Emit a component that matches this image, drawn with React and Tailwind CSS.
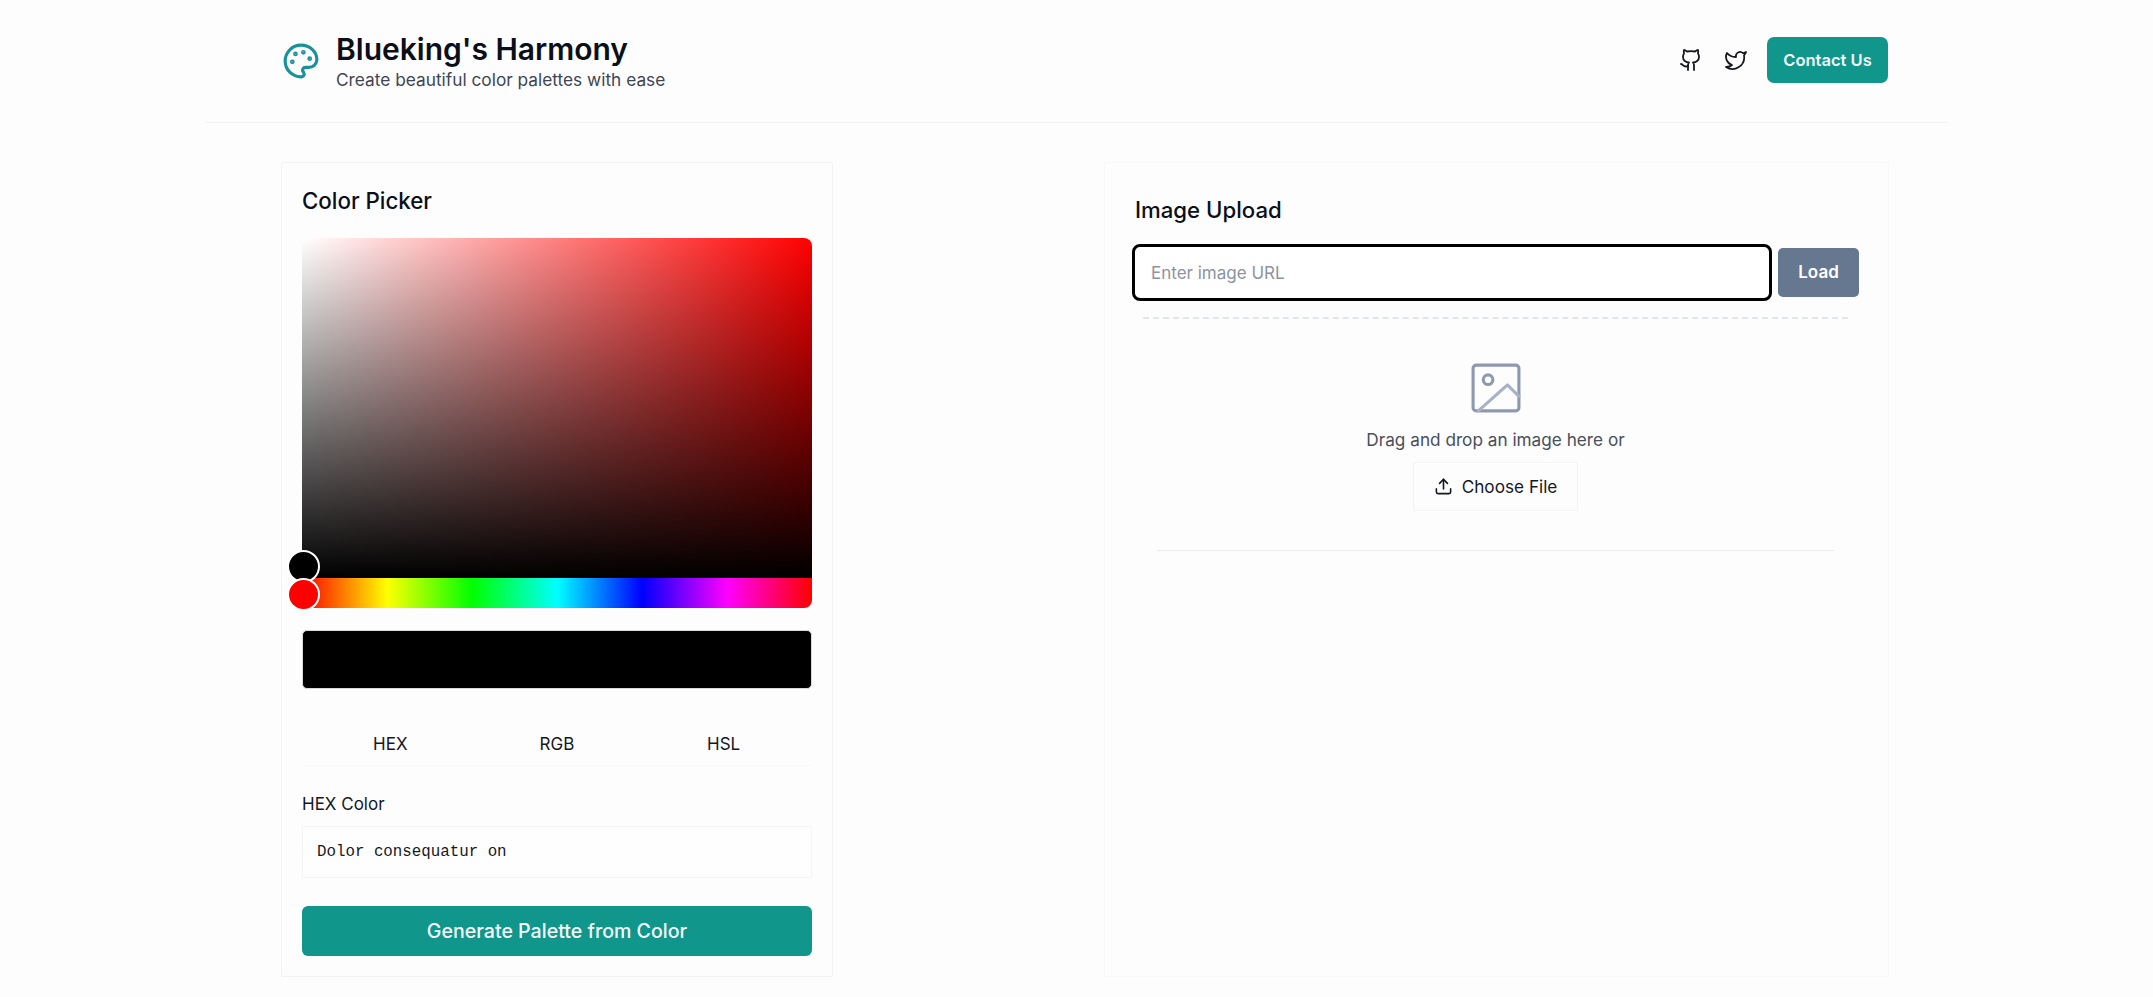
import React, { useState } from "react";
import { Palette, Github, Twitter, Upload } from "lucide-react";

function ColorPicker() {
  const [mode, setMode] = useState("HEX");
  return (
    <section className="h-[815px] border border-[#f2f3f5] rounded-[2px] px-5 pt-[21px] bg-[#fdfdfe] flex flex-col">
      <h2 className="text-[22.3px] leading-[34px] font-medium text-[#0b0f19] mb-[20px]">Color Picker</h2>

      <div className="relative">
        <div className="h-[340px] rounded-t-[8px] bg-[linear-gradient(to_top,#000,transparent),linear-gradient(to_right,#fff,#f00)]" />
        <div className="h-[30px] rounded-b-[8px] bg-[linear-gradient(to_right,#f00,#ff0,#0f0,#0ff,#00f,#f0f,#f00)]" />
        <div className="absolute left-[-15px] top-[312px] w-[33px] h-[33px] rounded-full bg-black border-2 border-white" />
        <div className="absolute left-[-15px] top-[340px] w-[33px] h-[33px] rounded-full bg-[#f00] border-2 border-white" />
      </div>

      <div className="h-[59px] mt-[22px] rounded-[5px] bg-black border border-[#d8dadd]" />

      <div className="grid grid-cols-3 px-[5px] mt-[35px] h-[42px] border-b border-[#f8f8f9]">
        {["HEX", "RGB", "HSL"].map((m) => (
          <button key={m} onClick={() => setMode(m)} className="text-[17px] leading-[40px] h-[40px] text-[#15181f]">
            {m}
          </button>
        ))}
      </div>

      <label className="block text-[17px] leading-[26px] text-[#15181f] mt-[25px] mb-[9px]">{mode} Color</label>
      <input
        readOnly
        value="Dolor consequatur on"
        className="w-full h-[52px] px-[14px] border border-[#f3f4f6] rounded-[2px] bg-[#fefefe] text-[15.8px] text-[#15181f] outline-none [font-family:'Liberation_Mono',monospace]"
      />

      <button className="w-full h-[50px] mt-[28px] rounded-[6px] bg-[#10968b] text-[#f4fbfa] text-[19.6px] font-medium pt-[2px]">
        Generate Palette from Color
      </button>
    </section>
  );
}

function ImageUpload() {
  return (
    <section className="h-[815px] border border-[#f8f8fa] rounded-[2px] pl-[27px] pr-[29px] pt-[30px] bg-[#fdfdfe]">
      <h2 className="ml-[3px] text-[22.2px] leading-[34px] font-medium text-[#0b0f19] mb-[17px]">Image Upload</h2>

      <div className="flex items-center gap-[6px]">
        <input
          placeholder="Enter image URL"
          className="flex-1 min-w-0 h-[57px] px-[16px] border-[3px] border-black rounded-[8px] bg-white text-[17px] outline-none placeholder:text-[#8d93a0]"
        />
        <button className="w-[81px] h-[49px] rounded-[5px] bg-[#667890] text-white text-[17px] font-semibold">Load</button>
      </div>

      <div className="mx-[11px] mt-[16px] h-[234px] border-t-2 border-dashed border-[#e2e5ea] flex flex-col items-center pt-[44px] relative">
        <svg width="50" height="50" viewBox="0 0 24 24" fill="none" strokeWidth="1.5" strokeLinejoin="round" strokeLinecap="round">
          <rect x="1" y="1" width="22" height="22" rx="1.5" stroke="#8e99b0" />
          <circle cx="8.2" cy="8" r="2.3" stroke="#8e99b0" />
          <path d="M3.5 23 L17.5 10.5 L23 16" stroke="#a9b1c4" />
        </svg>
        <p className="text-[17.2px] leading-[24px] text-[#4a4f5a] mt-[15px]">Drag and drop an image here or</p>
        <button className="flex items-center gap-[9px] h-[49px] px-[20px] mt-[10px] border border-[#f3f4f6] rounded-[2px] text-[17.2px] text-[#15181f]">
          <Upload size={19} />
          Choose File
        </button>
        <div className="absolute bottom-0 left-[14px] right-[14px] border-b border-[#e9ebee]" />
      </div>
    </section>
  );
}

export default function App() {
  return (
    <div className="min-h-[997px] bg-[#fdfdfe] font-['Inter',sans-serif]">
      <header className="h-[123px] mx-[205px] border-b border-[#f1f2f4] pl-[77px] pr-[60px] flex items-center justify-between">
        <div className="flex items-center gap-[16px]">
          <Palette size={38} strokeWidth={2} className="text-[#17929a]" />
          <div>
            <h1 className="text-[30px] leading-[38px] font-semibold text-[#0b0f19]">Blueking's Harmony</h1>
            <p className="text-[17.3px] leading-[24px] text-[#3f4551]">Create beautiful color palettes with ease</p>
          </div>
        </div>
        <div className="flex items-center gap-[19px] pb-[2px]">
          <div className="flex items-center gap-[21px]">
            <Github size={24} strokeWidth={1.8} className="text-[#15181f]" />
            <Twitter size={24} strokeWidth={1.8} className="text-[#15181f]" />
          </div>
          <button className="w-[121px] h-[46px] rounded-[7px] bg-[#10968b] text-[#f4fbfa] text-[16.5px] font-semibold pt-[1px]">
            Contact Us
          </button>
        </div>
      </header>

      <main className="grid grid-cols-[552px_785px] gap-[271px] pl-[281px] pt-[39px]">
        <ColorPicker />
        <ImageUpload />
      </main>
    </div>
  );
}
